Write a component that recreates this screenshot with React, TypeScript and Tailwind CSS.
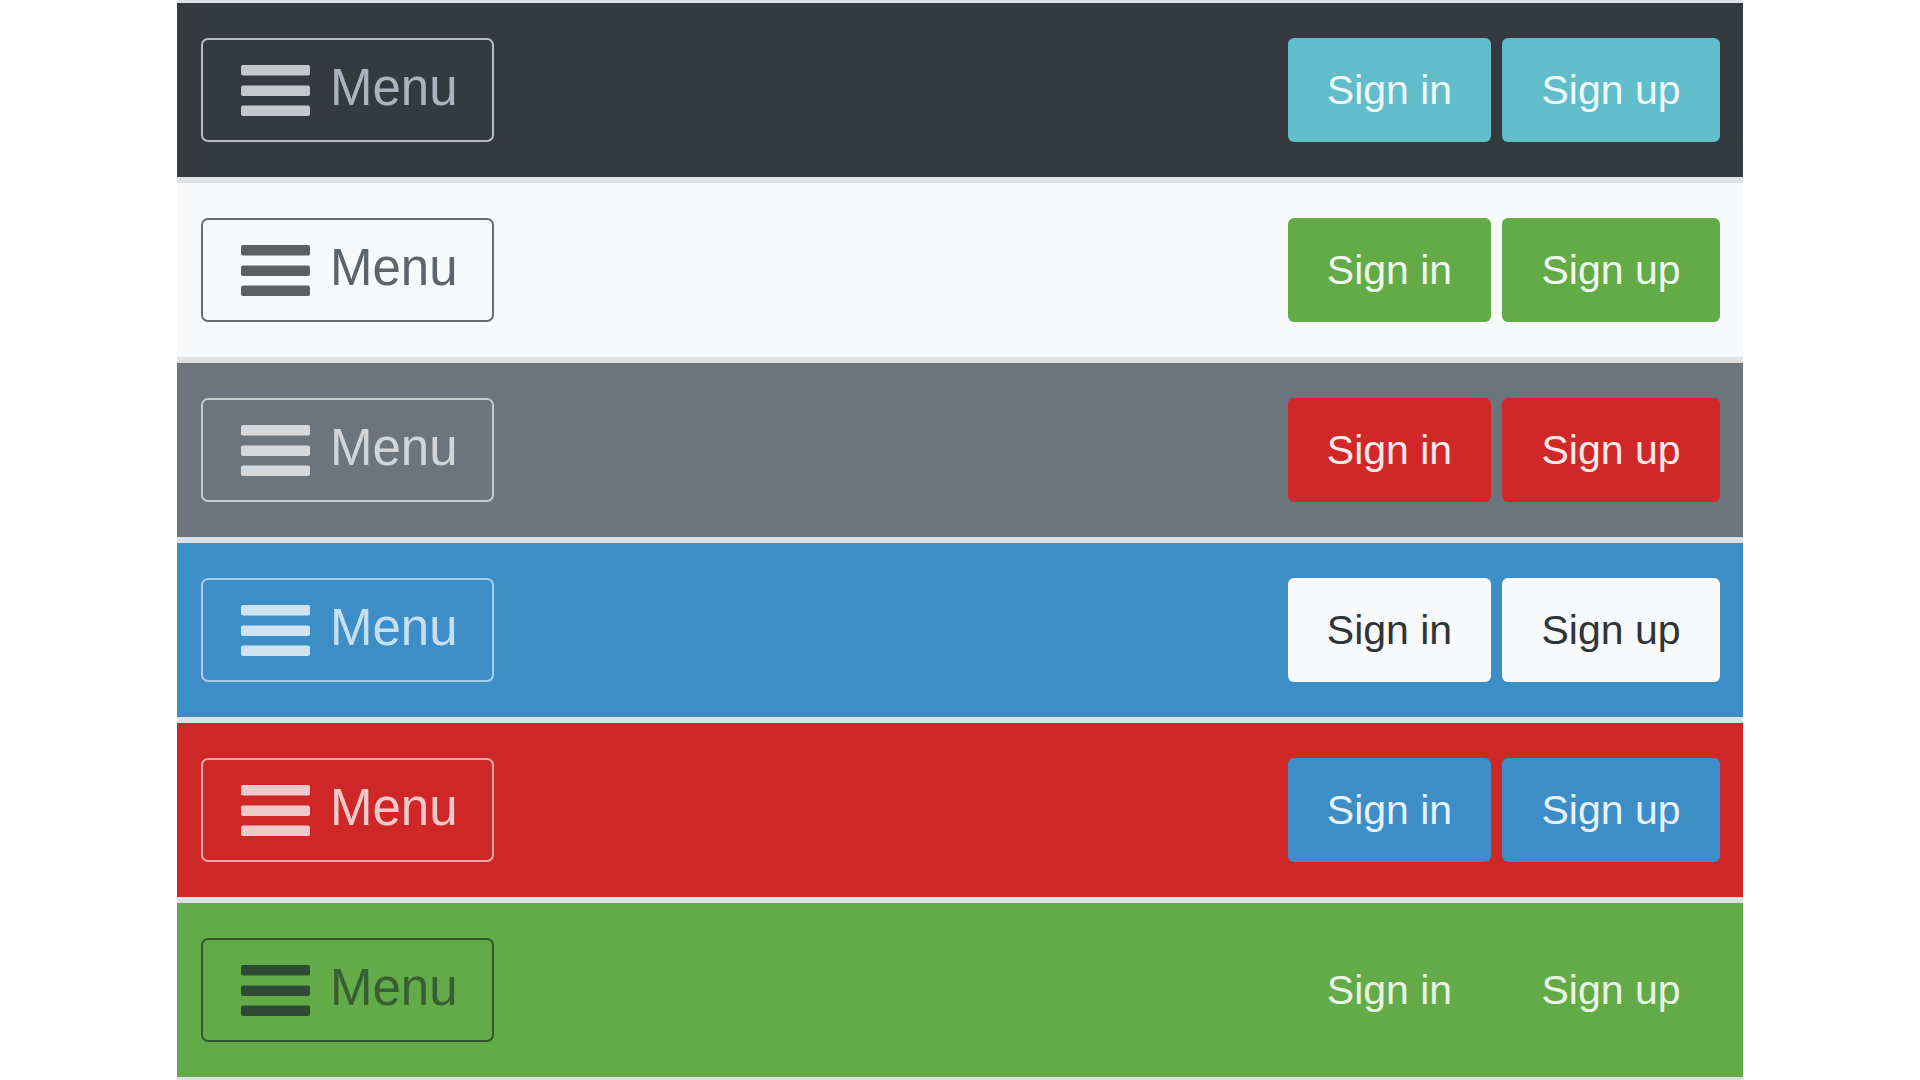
import React from "react";

type Row = {
  bg: string;
  border: string;
  text: string;
  icon: string;
  btn: string;
  btnText: string;
};

const rows: Row[] = [
  { bg: "bg-[#343a40]", border: "border-[#b9bcbf]", text: "text-[#aab3bd]", icon: "#c5c7ca", btn: "bg-[#62bdca]", btnText: "text-[#eef8fa]" },
  { bg: "bg-[#f8f9fa]", border: "border-[#6a6d70]", text: "text-[#5d646b]", icon: "#5d6063", btn: "bg-[#62ab47]", btnText: "text-[#f0f7ee]" },
  { bg: "bg-[#6c757d]", border: "border-[#c6cacd]", text: "text-[#d1d5d9]", icon: "#d6d9dc", btn: "bg-[#d02828]", btnText: "text-[#fbe8e8]" },
  { bg: "bg-[#3d8dc7]", border: "border-[#a9cde8]", text: "text-[#c6dff0]", icon: "#d0e3f1", btn: "bg-[#f8f9fa]", btnText: "text-[#2f3439]" },
  { bg: "bg-[#cf2727]", border: "border-[#eaa7a7]", text: "text-[#f2c9c9]", icon: "#eec9c9", btn: "bg-[#3d8dc7]", btnText: "text-[#e6f1f9]" },
  { bg: "bg-[#63ab48]", border: "border-[#2f5830]", text: "text-[#365f33]", icon: "#2f4a35", btn: "bg-transparent", btnText: "text-[#e9f3e4]" },
];

function Hamburger({ color }: { color: string }) {
  return (
    <svg width="69" height="51" viewBox="0 0 69 51" aria-hidden>
      <rect x="0" y="0" width="69" height="10.5" rx="2" fill={color} />
      <rect x="0" y="20.5" width="69" height="10.5" rx="2" fill={color} />
      <rect x="0" y="40.5" width="69" height="10.5" rx="2" fill={color} />
    </svg>
  );
}

function Bar({ r }: { r: Row }) {
  return (
    <div className={`${r.bg} h-[174px] pl-[24px] pr-[23px] flex items-center justify-between`}>
      <div className={`w-[293px] h-[104px] border-2 ${r.border} rounded-[7px] flex items-center pl-[38px]`}>
        <Hamburger color={r.icon} />
        <span className={`ml-[20px] mb-[6px] text-[51px] leading-none ${r.text}`}>Menu</span>
      </div>
      <div className="flex gap-[11px]">
        <div className={`w-[203px] h-[104px] rounded-[6px] ${r.btn} ${r.btnText} flex items-center justify-center text-[41px] leading-none`}>
          Sign in
        </div>
        <div className={`w-[218px] h-[104px] rounded-[6px] ${r.btn} ${r.btnText} flex items-center justify-center text-[41px] leading-none`}>
          Sign up
        </div>
      </div>
    </div>
  );
}

export default function App() {
  return (
    <div className="w-[1920px] h-[1080px] bg-white" style={{ fontFamily: '"Liberation Sans", Arial, sans-serif' }}>
      <div className="ml-[177px] w-[1566px] h-[1080px] bg-[#dfe2e5] pt-[3px] flex flex-col gap-[6px]">
        {rows.map((r, i) => (
          <Bar key={i} r={r} />
        ))}
      </div>
    </div>
  );
}
